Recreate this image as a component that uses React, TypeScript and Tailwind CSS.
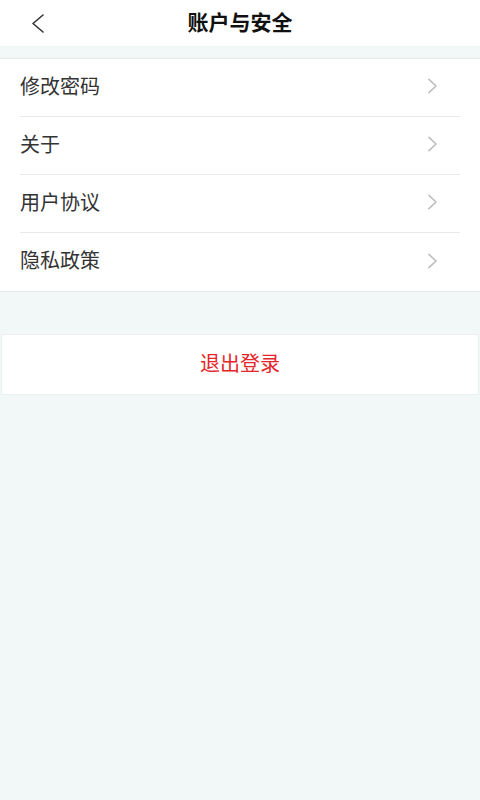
const items = ['修改密码', '关于', '用户协议', '隐私政策'];

function Chevron({ className }: { className?: string }) {
  return (
    <svg viewBox="0 0 12 18" className={className} fill="none" stroke="currentColor" strokeWidth="1.8" strokeLinecap="round" strokeLinejoin="round">
      <path d="M2 1.5 L10 9 L2 16.5" />
    </svg>
  );
}

export default function App() {
  return (
    <div className="min-h-[800px] w-[480px] bg-[#f2f7f7] font-['Noto_Sans_CJK_SC',sans-serif]">
      {/* Header */}
      <div className="relative flex h-[46px] items-center justify-center bg-white">
        <button className="absolute left-[31px] top-[14px] text-[#333]">
          <svg viewBox="0 0 14 19" className="h-[19px] w-[14px]" fill="none" stroke="currentColor" strokeWidth="1.6" strokeLinecap="round" strokeLinejoin="round">
            <path d="M12 1 L2 9.5 L12 18" />
          </svg>
        </button>
        <h1 className="pb-[3px] text-[21px] leading-none font-bold text-[#111]">账户与安全</h1>
      </div>

      {/* List */}
      <div className="mt-[12px] border-y border-[#e4e8e8] bg-white">
        {items.map((label, i) => (
          <div key={label} className="px-[20px]">
            <div
              className={`flex h-[58px] items-center justify-between ${i < items.length - 1 ? 'border-b border-[#e8eaea]' : ''}`}
            >
              <span className="pb-[4px] text-[20px] leading-none text-[#333]">{label}</span>
              <Chevron className="mr-[22px] mb-[3px] h-[16px] w-[11px] text-[#bdbdbd]" />
            </div>
          </div>
        ))}
      </div>

      {/* Logout */}
      <div className="mx-px mt-[42px] flex h-[61px] items-center justify-center border border-[#eceff0] bg-white">
        <span className="pb-[3px] text-[20px] leading-none text-[#e5252a]">退出登录</span>
      </div>
    </div>
  );
}
